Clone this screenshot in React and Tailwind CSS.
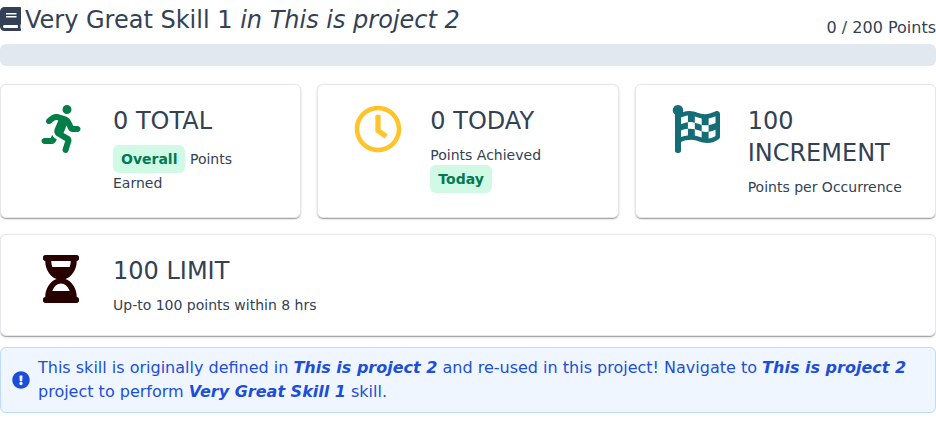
import {
  FaBook,
  FaRunning,
  FaRegClock,
  FaFlagCheckered,
  FaHourglassHalf,
  FaExclamationCircle,
} from 'react-icons/fa';

function Tag({ children }) {
  return (
    <span className="inline-flex items-center justify-center rounded-md bg-[#d0fae5] px-2 py-1 text-sm font-bold text-[#007a55]">
      {children}
    </span>
  );
}

function StatCard({ icon: Icon, color, title, className = '', children }) {
  return (
    <section
      className={`flex min-w-0 gap-3 rounded-md border border-[#e5e7eb] bg-white p-5 shadow-[0_2px_1px_-1px_rgba(0,0,0,0.2),0_1px_1px_0_rgba(0,0,0,0.14),0_1px_3px_0_rgba(0,0,0,0.12)] ${className}`}
    >
      <div className="flex w-20 shrink-0 justify-center">
        <Icon className={`h-12 w-auto ${color}`} />
      </div>
      <div className="min-w-0 flex-1">
        <h2 className="mb-2 text-2xl">{title}</h2>
        <div className="text-sm">{children}</div>
      </div>
    </section>
  );
}

export default function App() {
  return (
    <main className="w-full bg-white font-['DejaVu_Sans',sans-serif] text-[#334155]">
      <header className="flex h-11 items-start justify-between">
        <h1 className="flex items-start gap-1 pt-1 text-2xl">
          <FaBook className="mt-[3px] h-6 w-[21px]" />
          <span>
            Very Great Skill 1 <em>in This is project 2</em>
          </span>
        </h1>
        <span className="pt-4 text-base">0 / 200 Points</span>
      </header>

      <div className="h-[22px] rounded-md bg-[#e2e8f0]" />

      <div className="mt-[18px] grid grid-cols-3 gap-4">
        <StatCard icon={FaRunning} color="text-[#047e48]" title="0 TOTAL">
          <Tag>Overall</Tag> Points Earned
        </StatCard>
        <StatCard icon={FaRegClock} color="text-[#ffc42b]" title="0 TODAY">
          Points Achieved <Tag>Today</Tag>
        </StatCard>
        <StatCard icon={FaFlagCheckered} color="text-[#146c75]" title="100 INCREMENT">
          Points per Occurrence
        </StatCard>
        <StatCard icon={FaHourglassHalf} color="text-[#280000]" title="100 LIMIT" className="col-span-3">
          Up-to 100 points within 8 hrs
        </StatCard>
      </div>

      <div className="mt-[11px] flex items-center gap-2 rounded-md border border-[#bfdbfe] bg-[#eff6ff] px-[11px] py-2 text-base text-[#1d4ed8] shadow-[0_4px_8px_0_rgba(59,130,246,0.04)]">
        <FaExclamationCircle className="size-[18px] shrink-0" />
        <p>
          This skill is originally defined in <em className="font-bold">This is project 2</em> and re-used in
          this project! Navigate to <em className="font-bold">This is project 2</em> project to perform{' '}
          <em className="font-bold">Very Great Skill 1</em> skill.
        </p>
      </div>
    </main>
  );
}
